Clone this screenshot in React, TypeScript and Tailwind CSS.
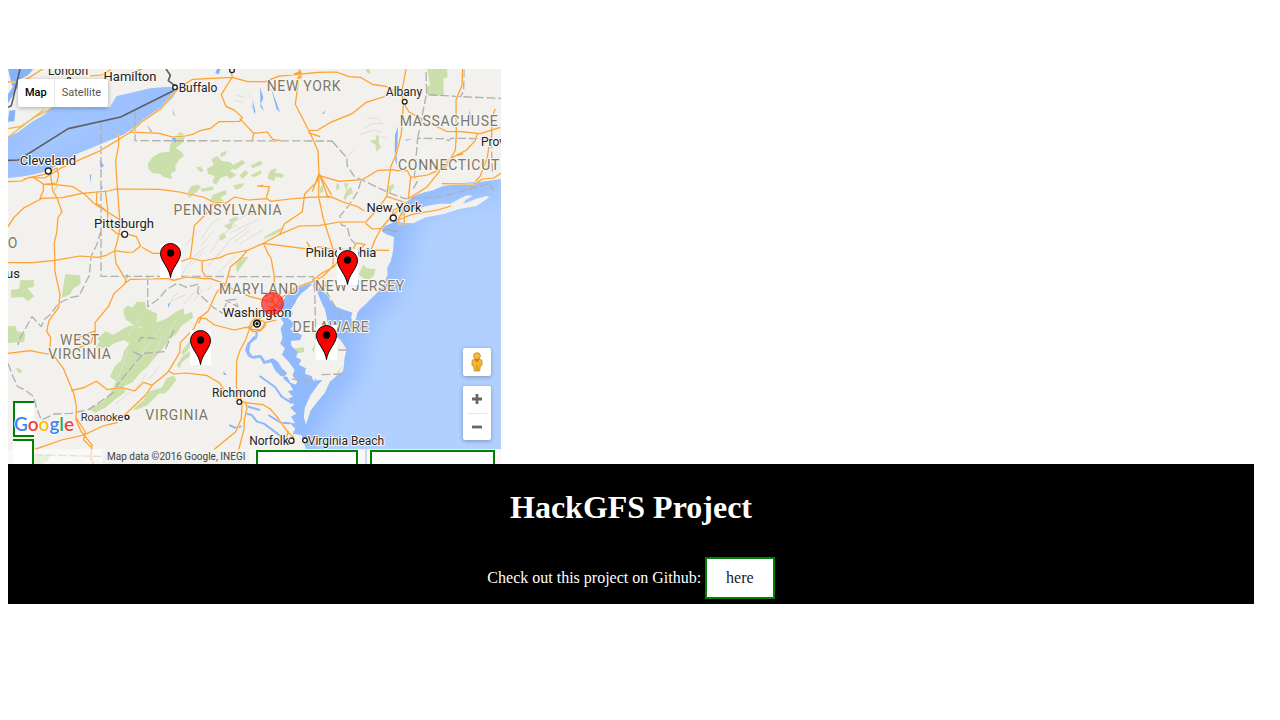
import React from "react";

type Label = { text: string; x: number; y: number; kind: "city" | "town" | "state" | "small" };

const LABELS: Label[] = [
  { text: "London", x: 60, y: 6, kind: "town" },
  { text: "Hamilton", x: 122, y: 12, kind: "city" },
  { text: "Buffalo", x: 190, y: 23, kind: "town" },
  { text: "Albany", x: 396, y: 27, kind: "town" },
  { text: "Prov", x: 485, y: 77, kind: "town" },
  { text: "Cleveland", x: 40, y: 96, kind: "city" },
  { text: "New York", x: 386, y: 143, kind: "city" },
  { text: "Pittsburgh", x: 116, y: 159, kind: "city" },
  { text: "Philadelphia", x: 333, y: 188, kind: "city" },
  { text: "us", x: 5, y: 209, kind: "city" },
  { text: "Washington", x: 249, y: 248, kind: "city" },
  { text: "Richmond", x: 231, y: 328, kind: "town" },
  { text: "Roanoke", x: 94, y: 352, kind: "small" },
  { text: "Norfolk", x: 261, y: 376, kind: "town" },
  { text: "Virginia Beach", x: 338, y: 376, kind: "town" },
  { text: "NEW YORK", x: 296, y: 22, kind: "state" },
  { text: "MASSACHUSE", x: 441, y: 57, kind: "state" },
  { text: "CONNECTICUT", x: 441, y: 101, kind: "state" },
  { text: "PENNSYLVANIA", x: 220, y: 146, kind: "state" },
  { text: "O", x: 5, y: 179, kind: "state" },
  { text: "MARYLAND", x: 251, y: 225, kind: "state" },
  { text: "NEW JERSEY", x: 352, y: 222, kind: "state" },
  { text: "DELAWARE", x: 323, y: 263, kind: "state" },
  { text: "WEST", x: 72, y: 276, kind: "state" },
  { text: "VIRGINIA", x: 72, y: 290, kind: "state" },
  { text: "VIRGINIA", x: 169, y: 351, kind: "state" },
];

const LABEL_STYLE = {
  city: "fill-[#222] text-[13px]",
  town: "fill-[#222] text-[12px]",
  small: "fill-[#333] text-[11px]",
  state: "fill-[#7d7666] text-[14px] tracking-wider",
};

const CITIES = [
  [145, 333, 9], [374, 523, 9], [1180, 474, 9], [1214, 125, 7], [525, 82, 7], [696, 31, 7],
  [718, 1026, 7], [381, 1072, 6], [874, 1142, 8], [915, 1141, 7], [207, 58, 5],
];

const PINS = [
  { x: 152, y: 174 },
  { x: 329, y: 181 },
  { x: 182, y: 261 },
  { x: 308, y: 256 },
];

const OCEAN =
  "M1503 357L1470 362L1440 366L1400 368L1375 373L1330 378L1300 391L1270 398L1240 408L1228 420L1216 428L1205 452L1195 480L1170 492L1148 500L1147 515L1162 524L1182 530L1180 570L1173 602L1162 625L1163 645L1148 680L1125 705L1110 720L1095 735L1080 748L1072 760L1068 778L1056 786L1053 770L1057 758L1032 750L1008 740L993 726L981 705L966 692L954 675L946 655L939 660L944 680L955 703L966 730L976 750L984 790L1000 820L1022 840L1040 868L1034 895L1030 932L1008 950L990 965L975 998L950 1028L932 1052L918 1095L911 1072L914 1044L931 1006L953 975L967 960L940 962L934 948L915 942L917 925L896 914L904 900L888 892L893 875L874 858L872 842L900 840L906 826L870 808L884 792L864 775L879 761L872 748L885 730L892 714L905 699L920 688L936 671L914 670L900 680L884 684L871 699L861 700L853 716L838 736L832 752L848 760L842 775L852 790L842 805L848 834L841 851L855 865L846 884L864 902L874 916L884 930L878 947L892 963L888 974L871 968L862 951L842 948L825 931L814 907L791 912L780 893L758 896L744 889L735 870L742 850L766 829L768 807L774 807L772 834L751 850L743 868L757 888L783 885L796 903L818 895L834 906L845 925L861 939L849 955L870 973L880 990L864 994L879 1011L865 1015L883 1034L871 1043L889 1061L873 1070L886 1090L869 1088L886 1106L878 1121L905 1125L918 1168L1503 1168Z";

const LAKE_ERIE =
  "M24 232L55 216L94 187L133 164L155 142L330 142L349 109L394 98L451 85L512 80L530 92L520 111L485 146L446 171L405 200L373 223L331 240L286 259L230 282L183 308L146 332L102 343L76 348L24 354Z";

const PARKS = [
  "M443 311L459 290L480 278L508 275L511 252L526 231L541 215L555 227L550 247L527 264L545 276L552 288L538 298L526 318L527 332L513 339L516 357L490 351L480 341L459 340L446 329Z",
  "M621 326L641 315L635 296L652 288L665 303L690 306L706 322L690 332L709 344L692 357L679 347L660 355L649 374L637 366L644 348L624 341Z",
  "M561 403L574 378L595 374L603 382L590 395L569 414Z M602 386L641 379L637 391L606 395Z M700 376L733 369L725 383L707 389Z M640 404L677 390L680 402L660 414L673 423L646 432L630 421Z M588 322L602 320L611 332L602 337Z M662 279L680 273L677 285L661 291Z M718 347L735 330L746 338L727 357Z",
  "M752 317L781 302L789 312L757 325Z M752 346L783 331L784 342L759 352Z M811 331L830 325L825 338L851 342L849 353L827 350L822 364L802 355Z M696 317L727 300L736 308L705 331Z M687 479L711 469L714 479L690 488Z M655 532L670 517L678 531L664 543Z M671 497L704 484L689 510Z",
  "M1282 27L1341 27L1343 52L1330 56L1331 106L1304 109L1277 102L1279 81L1290 75Z M1097 27L1109 27L1113 43L1099 36Z M1114 239L1128 239L1127 226L1138 227L1136 250L1144 261L1128 275L1127 254L1113 246Z",
  "M157 397L173 370L172 381L162 396Z M32 690L58 686L61 661L102 660L101 681L82 684L103 709L84 724L68 711L34 713Z M196 642L240 646L242 671L218 688L211 703L185 714L189 685Z M24 799L46 798L50 812L76 822L73 845L24 849Z M46 927L56 923L67 934L60 941Z",
  "M369 750L382 737L398 742L410 725L435 726L438 745L472 762L469 786L451 793L438 808L416 799L427 819L414 829L400 813L380 826L374 808L401 796L376 777Z",
  "M287 864L299 844L292 836L316 814L340 824L370 807L390 796L421 806L447 790L473 786L499 776L531 754L551 745L553 764L576 755L579 773L544 798L528 823L511 834L485 870L466 892L441 922L420 939L398 967L372 978L376 997L344 1019L316 1043L286 1058L265 1046L309 1025L331 999L348 964L330 950L344 919L365 900L372 873L388 851L374 840L344 849L325 863Z",
  "M396 1049L431 1021L441 997L486 982L500 954L521 947L529 960L513 981L496 999L476 1001L443 1035L410 1049Z M531 914L548 889L571 872L568 890L545 907L537 926Z M543 877L574 836L579 819L586 830L570 862L550 885Z",
  "M103 1184L150 1184L143 1203L125 1211L104 1211Z M707 612L719 592L746 590L728 615L711 638Z M1076 643L1090 614L1100 625L1127 628L1122 646L1108 659L1090 655Z M876 867L911 862L913 876L887 881L876 874Z M935 871L946 850L942 875Z M1160 383L1179 371L1183 378L1170 401L1158 397Z M960 384L971 369L970 396L960 399Z M1010 371L1014 369L1020 385L1008 391Z M1031 369L1045 370L1040 389L1053 382L1060 398L1041 409L1036 424L1031 412L1039 393Z M1027 917L1012 948L1000 963L1015 933Z",
  "M795 529L843 503L855 507L820 526L790 538Z",
];

const ROADS =
  "M24 365L65 363L88 352L134 354L183 324L226 305L299 273L352 241L389 218L430 182L483 146L512 110L540 81L578 58L697 52L743 65L796 65L834 49L891 43L956 37L1009 36L1047 50L1081 52L1117 73L1158 79L1208 107" +
  " M24 500L42 472L71 444L127 415L120 415L130 392L130 372L102 353 M71 357L130 344L171 324L176 347L170 369L130 373 M152 345L158 392L171 414L186 456L174 472L170 519L163 547L165 635L180 704L176 743L147 782L140 814L152 833L149 870L190 925L222 1002L229 1040L228 1079L243 1114L276 1155L272 1190L280 1211" +
  " M127 415L187 413L245 400L326 393L347 387L480 388L538 396L609 411L640 426L677 430L704 411L745 420L801 416L812 424L870 417L929 412L992 410L1029 426L1073 440L1093 453" +
  " M134 373L168 374L219 380L253 402L283 431L326 458L360 479L361 508 M356 223L356 256L347 304L352 384L361 501L352 543L344 572L348 610L377 659L375 671L342 701L325 740L285 788L286 812L272 849L223 869" +
  " M291 394L289 430L316 450 M316 391L323 448L323 490L332 505L350 520L366 523 M386 523L409 530L422 558L399 576L381 577L345 572L316 587L292 592L240 588L165 601L99 608L24 608 M426 562L458 580L489 580" +
  " M640 430L624 456L583 497L571 594L544 604 M571 594L606 603L660 593L684 582L742 571L790 550L839 523L853 492L907 455L914 402L951 365L957 340L974 370L995 405 M957 340L954 273L932 223L886 133L897 50L898 27 M957 340L956 411L970 477L1001 573L999 618L970 648L947 661L883 684L848 711L829 732L795 760L773 783L749 805L737 839L720 871L710 902L709 979L726 1028L724 1076L707 1115L643 1168L628 1190" +
  " M377 668L391 658L459 657L504 655L521 661L561 651L611 656L631 656L666 668L703 690L750 710L818 726 M606 603L607 633L617 651 M742 571L720 597L691 621L678 669L650 697L624 754L595 776L582 805L541 848L539 878L514 920L501 939L456 976L437 1005L350 1088L309 1098L251 1125L185 1140L104 1168" +
  " M595 774L618 776L644 795L703 810L737 802L752 803 M603 775L596 790 M504 932L521 942L559 939L622 947L658 968L675 993L715 1018L735 1028L789 1034L811 1047L830 1069L864 1117L880 1131L878 1150L863 1151L859 1137L865 1112 M736 1025L741 1045L733 1079L732 1108L716 1170L729 1211" +
  " M790 550L804 580L813 594L822 643L824 680L818 726 M790 550L890 563L933 568L956 560L990 567L1167 571 M839 523L898 498L957 497L1018 486L1097 486L1133 448L1160 409L1193 420L1220 430L1209 451L1194 480L1236 463L1313 450L1353 438" +
  " M1097 490L1117 507L1143 505L1125 540L1112 572 M1143 505L1162 483L1203 442L1230 436 M1160 409L1172 321L1189 282L1204 221L1210 135L1206 93L1218 27 M1214 133L1227 156L1242 164L1290 190L1339 214L1382 215L1440 221L1501 202 M1388 27L1386 76L1368 120L1369 225L1366 270L1340 319L1283 345L1232 352L1222 332L1191 332L1180 329L1134 331L1087 359L1017 364L956 346 M1432 219L1426 241L1400 270L1371 285L1345 301L1281 381L1225 416L1232 352 M1372 287L1390 281 M1486 147L1476 170L1475 228L1466 264L1462 293L1440 350L1426 363" +
  " M1326 371L1422 372L1448 357L1481 354L1503 340 M928 212L952 211L990 188L1058 160L1099 127L1158 108 M925 218L960 230 M389 216L478 220L517 231L556 228L578 223L600 212L632 205L657 185L719 184L727 173L704 151L678 139L664 104L689 63L697 52L692 27 M719 175L761 220L757 240 M761 220L802 216L818 238L841 242" +
  " M24 65L53 67L86 54L128 27 M24 880L90 872L141 882L162 882 M228 837L252 825L285 813 M213 992L251 983L289 964L322 989L365 983L404 993L430 967L455 975 M226 1070L256 1116L251 1140L275 1163L272 1200 M937 661L970 637L1002 620L1016 600L1040 600 M1062 561L1070 549L1095 553L1078 571L1062 571Z M881 43L902 34L903 53L891 55 M752 790L763 776L791 784L797 796L785 809L755 809Z M771 378L808 380L799 414 M771 378L790 376 M270 48L305 45L332 29 M395 38L427 27 M750 796L745 803L760 815L782 812L795 788L829 780 M1172 483L1181 450L1196 442L1212 452L1213 494 M1194 480L1200 496 M795 710L810 700L835 712L846 730 M805 738L820 745L838 735 M812 712L829 742 M920 545L933 568L936 578 M985 415L957 340L937 395";

const BORDERS =
  "M303 187L303 649L940 650L944 690L948 845 M405 153L405 242L996 243 M443 650L443 740L478 715L498 690L530 670L560 682L597 672L593 698L640 742L668 760 M303 512L290 555L273 590L268 646L237 708L213 712L176 730L150 765L133 778L124 800L96 770L62 831L53 855 M996 243L1040 293L1042 319L1062 348L1083 359L1164 397L1214 416L1325 410L1468 371L1480 391 M1083 362L1073 395L1046 437L1020 468L1024 495L1042 500L1050 536L1075 560 M1240 386L1252 364L1243 349L1253 235L1336 236L1345 242L1354 235L1473 236L1478 345 M1253 235L1279 104L1386 110L1503 115 M1280 98L1278 27 M1392 27L1391 93L1382 110 M668 752L685 720L707 718L713 740L675 720 M970 655L982 700L1028 780 M24 910L39 950L53 980L75 990L101 1010L109 1042L124 1080L163 1062L213 1060L265 1049L316 1015L342 996L355 970L430 880L493 875L515 825L524 805 M415 846L423 832L465 835 M400 875L430 890 M104 1184L330 1190 M876 957L915 963L948 958 M965 944L1025 942 M1015 870L1042 870";

const SHADING =
  "M420 774L385 827 M485 795L426 885 M440 855L398 925 M385 865L355 954 M489 827L452 904 M530 776L493 839 M505 743L521 708L536 699 M550 733L592 688 M541 650L580 591L620 558 M630 580L662 530L711 492 M643 601L688 542L743 502 M603 539L634 491L660 474 M692 518L781 476 M620 622L659 577 M656 638L707 587 M719 552L789 509 M690 492L739 465L772 462 M555 558L593 514 M575 614L606 580 M520 722L559 702 M582 724L608 687 M619 691L637 677 M602 558L635 518 M700 549L746 512 M440 940L411 980 M482 914L447 958 M391 994L346 1033 M1090 205L1120 190L1152 191 M1079 224L1120 211L1145 216 M1101 175L1131 173L1144 184 M1145 230L1159 235 M1060 271L1040 294 M709 106L733 112 M704 122L730 126 M741 100L751 113";

const LAKES =
  "M24 27L100 27L85 45L65 55L54 80L24 130L24 103L38 82Z M28 152L46 150L43 184L24 185L25 172Z M780 82L790 113L783 131L792 153L782 142Z M812 80L840 157L830 148Z M757 114L766 153L762 163Z M1185 225L1194 199L1190 318L1184 292Z M651 27L661 27L657 43L646 39Z M441 194L463 223L453 219Z M516 145L526 168L521 165Z M752 129L769 158L762 152Z M299 300L312 317L302 325Z M269 346L274 342L272 370Z M514 232L527 232L528 249L519 242Z M1407 150L1414 170L1420 179L1407 181Z M1215 240L1237 235L1219 243Z M966 161L977 151L971 163Z M670 933L680 945L671 944Z M512 724L503 734L506 742Z M310 379L299 398L304 380Z M379 641L385 646L381 660Z";

const LONG_ISLAND =
  "M1189 484L1212 461L1243 448L1280 438L1318 431L1352 431L1377 417L1401 406L1420 407L1397 420L1389 432L1429 416L1461 408L1468 412L1430 438L1378 447L1332 462L1278 472L1240 490L1210 489Z";

const BOX = "absolute border-[#008000] bg-white";

function MapDrawing() {
  return (
    <svg viewBox="0 0 493 395" className="block h-auto w-full" role="img" aria-label="Mid-Atlantic map">
      <defs>
        <clipPath id="sea"><path d={OCEAN} /></clipPath>
        <clipPath id="erie"><path d={LAKE_ERIE} /></clipPath>
        <filter id="soft" x="-20%" y="-20%" width="140%" height="140%">
          <feGaussianBlur stdDeviation="40" />
        </filter>
      </defs>
      <rect width="493" height="395" fill="#f2f1ee" />
      <g transform="scale(0.33333) translate(-24 -27)" fill="none" strokeLinejoin="round">
        <path d={PARKS.join(" ")} fill="#cbdfaa" />
        <path d={SHADING} stroke="#deddd7" strokeWidth="3" />
        <path d={LAKES} fill="#86b2fb" />
        <path d={LAKE_ERIE} fill="#a5c8ff" />
        <g clipPath="url(#erie)">
          <path d={LAKE_ERIE} stroke="#92b9fd" strokeWidth="40" filter="url(#soft)" />
        </g>
        <path d={OCEAN} fill="#b1d0ff" />
        <g clipPath="url(#sea)">
          <path d={OCEAN.replace("L1503 1168Z", "")} stroke="#8fb8fd" strokeWidth="90" filter="url(#soft)" />
        </g>
        <path d={LONG_ISLAND} fill="#f2f1ee" />
        <path d="M688 1095L704 1103L724 1099 M735 1060L755 1065L771 1085L792 1091L831 1120L860 1145 M779 948L825 981L845 1010L877 1030 M740 1039L780 1050 M805 1065L842 1088L870 1090 M764 830L749 848L744 878" stroke="#8eb7fb" strokeWidth="6" />
        <path d="M1146 512L1167 507L1175 512L1195 514" stroke="#a8a8a8" strokeWidth="4" />
        <path d={BORDERS} stroke="#b0b0ae" strokeWidth="4" strokeDasharray="26 9" />
        <path d={ROADS} stroke="#fdebcf" strokeWidth="6" />
        <path d={ROADS} stroke="#fba236" strokeWidth="3.6" />
        <path d="M24 206L63 199L105 171L155 146 M24 232L52 210L100 173L132 149" stroke="#e9b949" strokeWidth="4" />
        <path d="M60 27L40 113L34 137L24 142 M24 301L55 300L205 206L362 171L520 92L524 77L505 62L511 46L498 27" stroke="#606060" strokeWidth="5" />
        <rect x="24" y="1168" width="1479" height="43" fill="#fff" fillOpacity="0.6" />
        <path d="M1098 1168L1098 1211" stroke="#c3d8fb" strokeWidth="6" />
        {CITIES.map(([x, y, r]) => (
          <circle key={`${x}-${y}`} cx={x} cy={y} r={r} fill="#fff" stroke="#222" strokeWidth="4" />
        ))}
        <circle cx="771" cy="791" r="10" fill="#fff" stroke="#111" strokeWidth="5" />
        <circle cx="771" cy="791" r="5" fill="#111" />
      </g>
      <g textAnchor="middle" className="font-[Roboto,sans-serif]" stroke="#f7f6f3" strokeWidth="2" strokeLinejoin="round" paintOrder="stroke">
        {LABELS.map((l) => (
          <text key={`${l.text}-${l.x}-${l.y}`} x={l.x} y={l.y} className={LABEL_STYLE[l.kind]}>
            {l.text}
          </text>
        ))}
      </g>
      <circle cx="264.5" cy="234.5" r="11" fill="#ff0000" fillOpacity="0.6" stroke="#e51c23" strokeOpacity="0.75" />
      {PINS.map((p) => (
        <g key={`${p.x}-${p.y}`} transform={`translate(${p.x} ${p.y})`}>
          <rect width="21" height="35" fill="#fff" />
          <path d="M10.5 34.5C9.5 25 .5 18 .5 10.5a10 10 0 0 1 20 0C20.5 18 11.5 25 10.5 34.5Z" fill="#f00" stroke="#000" />
          <circle cx="10.5" cy="10" r="3.7" fill="#000" />
        </g>
      ))}
    </svg>
  );
}

function Pegman() {
  return (
    <svg viewBox="0 0 14 20" className="h-5 w-3.5" aria-hidden="true">
      <path d="M3.5 7.500h7l1.500 1v5l-1.700.5-.6 5H4.300l-.6-5-1.700-.5v-5Z" fill="#f7b529" stroke="#c18c25" strokeWidth=".8" />
      <circle cx="7" cy="4" r="3.3" fill="#fbbd2d" stroke="#b9841f" strokeWidth=".8" />
      <path d="M4.5 7.500h5L7 10.500Z" fill="#ef6c2f" />
      <path d="M7 13v6" stroke="#c18c25" />
    </svg>
  );
}

export default function App() {
  return (
    <div className="bg-white pt-[69px] pr-[26px] pl-2 font-['Liberation_Serif',serif] text-base text-black">
      <main className="relative w-full max-w-[493px] overflow-hidden">
        <MapDrawing />

        <div className="absolute top-2.5 left-2.5 flex h-7 rounded-xs bg-white font-[Roboto,sans-serif] text-[11px] shadow-[0_1px_4px_rgba(0,0,0,0.3)]">
          <button type="button" className="border-r border-[#e6e6e6] px-[7px] font-medium text-black">Map</button>
          <button type="button" className="px-[7px] text-[#565656]">Satellite</button>
        </div>

        <div className="absolute right-2.5 bottom-6 flex w-7 flex-col gap-2.5">
          <button type="button" aria-label="Street View" className="flex h-7 items-center justify-center rounded-xs bg-white shadow-[0_1px_4px_rgba(0,0,0,0.3)]">
            <Pegman />
          </button>
          <div className="flex h-[54px] flex-col items-center rounded-xs bg-white shadow-[0_1px_4px_rgba(0,0,0,0.3)]">
            <button type="button" aria-label="Zoom in" className="flex w-full flex-1 items-center justify-center">
              <svg viewBox="0 0 10 10" className="size-2.5" aria-hidden="true"><path d="M0 5h10M5 0v10" stroke="#666" strokeWidth="2.8" /></svg>
            </button>
            <span className="h-px w-5 bg-[#e6e6e6]" />
            <button type="button" aria-label="Zoom out" className="flex w-full flex-1 items-center justify-center">
              <svg viewBox="0 0 10 10" className="size-2.5" aria-hidden="true"><path d="M0 5h10" stroke="#666" strokeWidth="2.8" /></svg>
            </button>
          </div>
        </div>

        <a href="#google" aria-label="Google" className={`${BOX} bottom-[27px] left-[5px] h-9 w-[21px] border-y-2 border-l-2`}>
          <svg viewBox="0 0 64 24" className="absolute top-[11px] -left-px h-6 w-16 max-w-none" aria-hidden="true">
            <text x="0" y="17" className="font-[Lato,sans-serif] text-[19px] font-semibold" stroke="#fff" strokeWidth="1.5" paintOrder="stroke">
              <tspan fill="#4285f4">G</tspan>
              <tspan fill="#ea4335">o</tspan>
              <tspan fill="#fbbc05">o</tspan>
              <tspan fill="#4285f4">g</tspan>
              <tspan fill="#34a853">l</tspan>
              <tspan fill="#ea4335">e</tspan>
            </text>
          </svg>
        </a>
        <a href="#legal" aria-label="Legal" className={`${BOX} bottom-0 left-[5px] h-[25px] w-[21px] border-t-2 border-r-2`} />
        <small className="absolute bottom-0 left-[95px] bg-[#f2f1ee] px-1 font-[Roboto,sans-serif] text-[10px] leading-[14px] whitespace-nowrap text-[#444]">
          Map data ©2016 Google, INEGI
        </small>
        <a href="#terms" aria-label="Terms of Use" className={`${BOX} right-[143px] bottom-0 h-3.5 w-[102px] border-x-2 border-t-2`} />
        <a href="#report" aria-label="Report a map error" className={`${BOX} right-1.5 bottom-0 h-3.5 w-[125px] border-x-2 border-t-2`} />
      </main>

      <footer className="bg-black pt-[25px] pb-[5px] text-center text-white">
        <h1 className="text-[32px] leading-[37px] font-bold">HackGFS Project</h1>
        <p className="mt-[31px] flex items-center justify-center gap-1 leading-[18px]">
          Check out this project on Github:
          <a href="#github" className="border-2 border-[#008000] bg-white px-[19px] py-2.5 text-[#222]">here</a>
        </p>
      </footer>
    </div>
  );
}
